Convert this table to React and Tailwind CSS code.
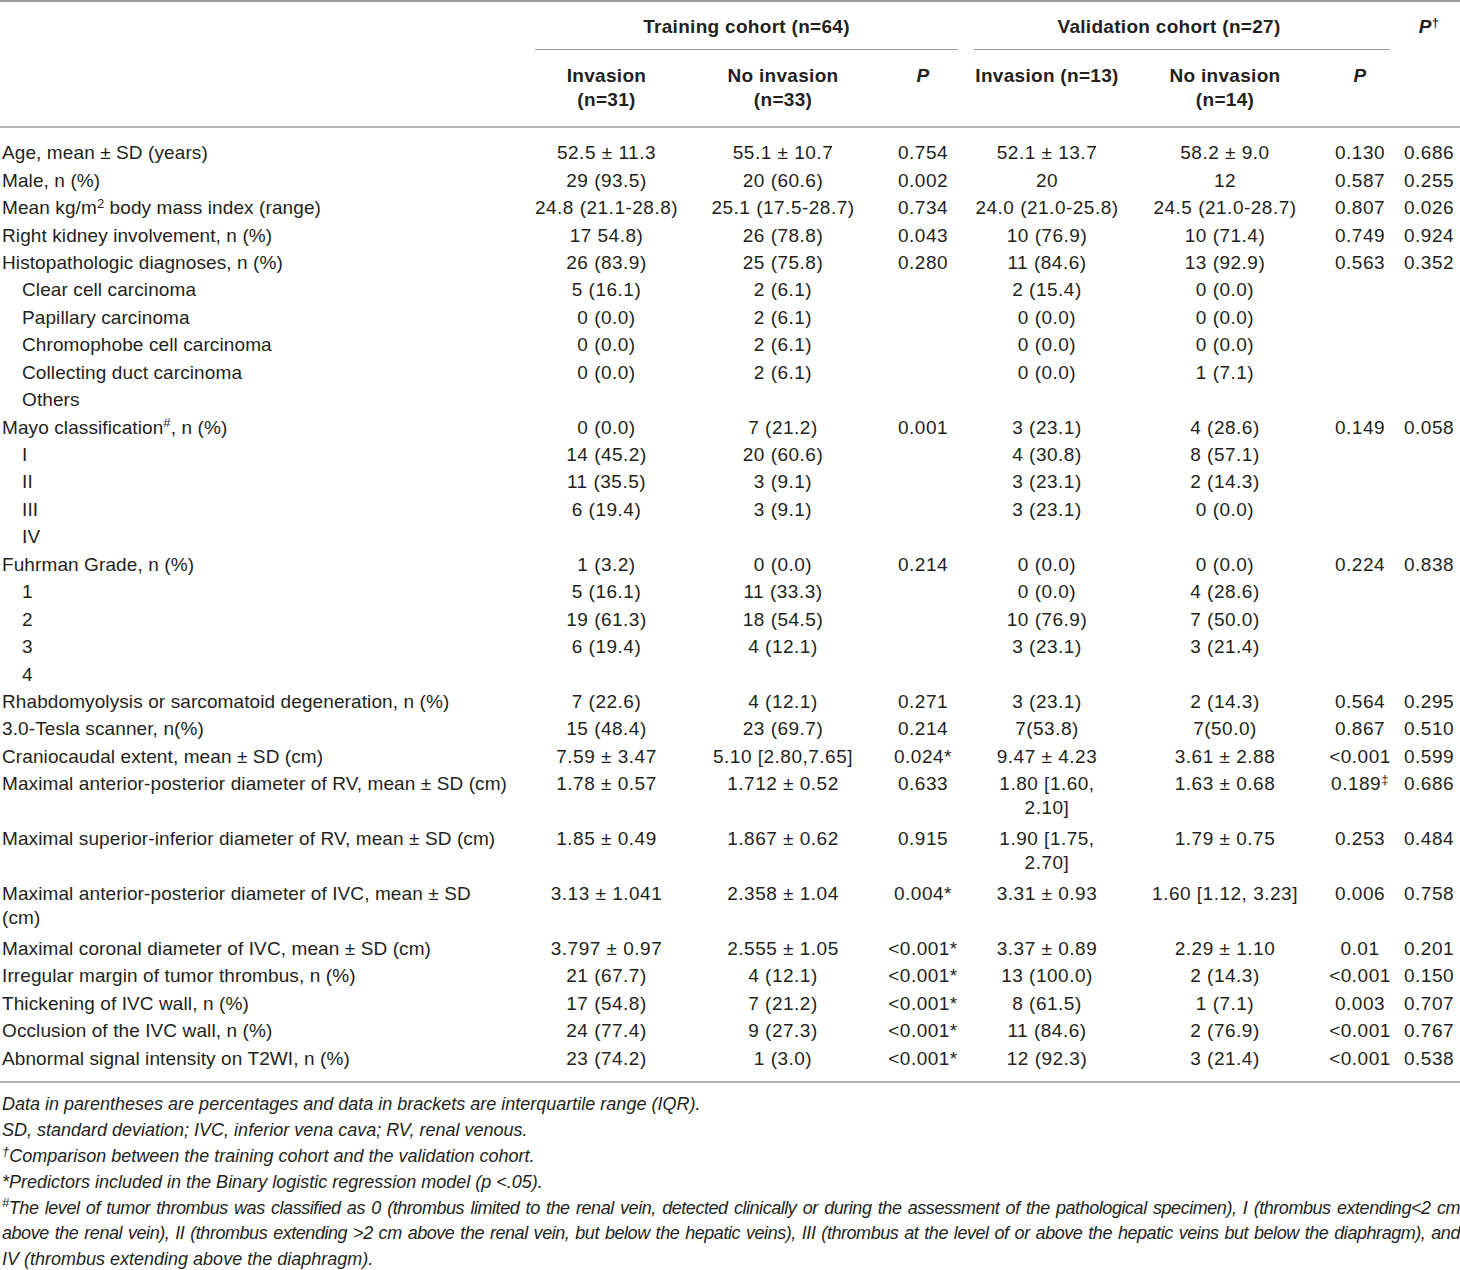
const cols = 'grid grid-cols-[527px_159px_194px_86px_162px_194px_76px_62px]';

const sup = 'text-[13px]';

const rows = [
  { label: 'Age, mean ± SD (years)', v: ['52.5 ± 11.3', '55.1 ± 10.7', '0.754', '52.1 ± 13.7', '58.2 ± 9.0', '0.130', '0.686'] },
  { label: 'Male, n (%)', v: ['29 (93.5)', '20 (60.6)', '0.002', '20', '12', '0.587', '0.255'] },
  {
    label: (
      <>
        Mean kg/m<sup className={sup}>2</sup> body mass index (range)
      </>
    ),
    v: ['24.8 (21.1-28.8)', '25.1 (17.5-28.7)', '0.734', '24.0 (21.0-25.8)', '24.5 (21.0-28.7)', '0.807', '0.026'],
  },
  { label: 'Right kidney involvement, n (%)', v: ['17 54.8)', '26 (78.8)', '0.043', '10 (76.9)', '10 (71.4)', '0.749', '0.924'] },
  { label: 'Histopathologic diagnoses, n (%)', v: ['26 (83.9)', '25 (75.8)', '0.280', '11 (84.6)', '13 (92.9)', '0.563', '0.352'] },
  { label: 'Clear cell carcinoma', sub: true, v: ['5 (16.1)', '2 (6.1)', '', '2 (15.4)', '0 (0.0)', '', ''] },
  { label: 'Papillary carcinoma', sub: true, v: ['0 (0.0)', '2 (6.1)', '', '0 (0.0)', '0 (0.0)', '', ''] },
  { label: 'Chromophobe cell carcinoma', sub: true, v: ['0 (0.0)', '2 (6.1)', '', '0 (0.0)', '0 (0.0)', '', ''] },
  { label: 'Collecting duct carcinoma', sub: true, v: ['0 (0.0)', '2 (6.1)', '', '0 (0.0)', '1 (7.1)', '', ''] },
  { label: 'Others', sub: true, v: ['', '', '', '', '', '', ''] },
  {
    label: (
      <>
        Mayo classification<sup className={sup}>#</sup>, n (%)
      </>
    ),
    v: ['0 (0.0)', '7 (21.2)', '0.001', '3 (23.1)', '4 (28.6)', '0.149', '0.058'],
  },
  { label: 'I', sub: true, v: ['14 (45.2)', '20 (60.6)', '', '4 (30.8)', '8 (57.1)', '', ''] },
  { label: 'II', sub: true, v: ['11 (35.5)', '3 (9.1)', '', '3 (23.1)', '2 (14.3)', '', ''] },
  { label: 'III', sub: true, v: ['6 (19.4)', '3 (9.1)', '', '3 (23.1)', '0 (0.0)', '', ''] },
  { label: 'IV', sub: true, v: ['', '', '', '', '', '', ''] },
  { label: 'Fuhrman Grade, n (%)', v: ['1 (3.2)', '0 (0.0)', '0.214', '0 (0.0)', '0 (0.0)', '0.224', '0.838'] },
  { label: '1', sub: true, v: ['5 (16.1)', '11 (33.3)', '', '0 (0.0)', '4 (28.6)', '', ''] },
  { label: '2', sub: true, v: ['19 (61.3)', '18 (54.5)', '', '10 (76.9)', '7 (50.0)', '', ''] },
  { label: '3', sub: true, v: ['6 (19.4)', '4 (12.1)', '', '3 (23.1)', '3 (21.4)', '', ''] },
  { label: '4', sub: true, v: ['', '', '', '', '', '', ''] },
  { label: 'Rhabdomyolysis or sarcomatoid degeneration, n (%)', v: ['7 (22.6)', '4 (12.1)', '0.271', '3 (23.1)', '2 (14.3)', '0.564', '0.295'] },
  { label: '3.0-Tesla scanner, n(%)', v: ['15 (48.4)', '23 (69.7)', '0.214', '7(53.8)', '7(50.0)', '0.867', '0.510'] },
  { label: 'Craniocaudal extent, mean ± SD (cm)', v: ['7.59 ± 3.47', '5.10 [2.80,7.65]', '0.024*', '9.47 ± 4.23', '3.61 ± 2.88', '<0.001', '0.599'] },
  {
    label: 'Maximal anterior-posterior diameter of RV, mean ± SD (cm)',
    double: true,
    v: [
      '1.78 ± 0.57',
      '1.712 ± 0.52',
      '0.633',
      <>
        1.80 [1.60,
        <br />
        2.10]
      </>,
      '1.63 ± 0.68',
      <>
        0.189<sup className={sup}>‡</sup>
      </>,
      '0.686',
    ],
  },
  {
    label: 'Maximal superior-inferior diameter of RV, mean ± SD (cm)',
    double: true,
    v: [
      '1.85 ± 0.49',
      '1.867 ± 0.62',
      '0.915',
      <>
        1.90 [1.75,
        <br />
        2.70]
      </>,
      '1.79 ± 0.75',
      '0.253',
      '0.484',
    ],
  },
  {
    label: (
      <>
        Maximal anterior-posterior diameter of IVC, mean ± SD
        <br />
        (cm)
      </>
    ),
    double: true,
    v: ['3.13 ± 1.041', '2.358 ± 1.04', '0.004*', '3.31 ± 0.93', '1.60 [1.12, 3.23]', '0.006', '0.758'],
  },
  { label: 'Maximal coronal diameter of IVC, mean ± SD (cm)', v: ['3.797 ± 0.97', '2.555 ± 1.05', '<0.001*', '3.37 ± 0.89', '2.29 ± 1.10', '0.01', '0.201'] },
  { label: 'Irregular margin of tumor thrombus, n (%)', v: ['21 (67.7)', '4 (12.1)', '<0.001*', '13 (100.0)', '2 (14.3)', '<0.001', '0.150'] },
  { label: 'Thickening of IVC wall, n (%)', v: ['17 (54.8)', '7 (21.2)', '<0.001*', '8 (61.5)', '1 (7.1)', '0.003', '0.707'] },
  { label: 'Occlusion of the IVC wall, n (%)', v: ['24 (77.4)', '9 (27.3)', '<0.001*', '11 (84.6)', '2 (76.9)', '<0.001', '0.767'] },
  { label: 'Abnormal signal intensity on T2WI, n (%)', v: ['23 (74.2)', '1 (3.0)', '<0.001*', '12 (92.3)', '3 (21.4)', '<0.001', '0.538'] },
];

function Row({ row }) {
  const h = row.double ? 'h-[54.9px]' : 'h-[27.45px]';
  return (
    <div className={`${cols} ${h}`}>
      <div className={`pt-[1.7px] leading-[24px] whitespace-nowrap tracking-[0.1px] ${row.sub ? 'pl-[22px]' : 'pl-[2px]'}`}>{row.label}</div>
      {row.v.map((val, i) => (
        <div key={i} className="flex justify-center pt-[1.7px] leading-[24px] tracking-[0.5px]">
          <span className="text-center whitespace-nowrap">{val}</span>
        </div>
      ))}
    </div>
  );
}

export default function App() {
  return (
    <div className="w-[1460px] h-[1270px] bg-white text-[#231f20] text-[19px] font-['Liberation_Sans',Arial,sans-serif] overflow-hidden">
      <div className="border-t-2 border-[#9a9a9a]">
        {/* header */}
        <div className={`${cols} font-bold tracking-[0.3px]`}>
          <div className="row-span-2" />
          <div className="col-span-3 h-[48px] px-2">
            <div className="h-full border-b border-[#9a9a9a] pt-[13px] leading-[24px] text-center">Training cohort (n=64)</div>
          </div>
          <div className="col-span-3 h-[48px] px-2">
            <div className="h-full border-b border-[#9a9a9a] pt-[13px] leading-[24px] text-center pr-[26px]">Validation cohort (n=27)</div>
          </div>
          <div className="pt-[13px] leading-[24px] text-center">
            <i>P</i>
            <sup className={sup}>†</sup>
          </div>
          <div className="h-[76px] pt-[14px] leading-[24px] text-center">
            Invasion
            <br />
            (n=31)
          </div>
          <div className="pt-[14px] leading-[24px] text-center">
            No invasion
            <br />
            (n=33)
          </div>
          <div className="pt-[14px] leading-[24px] text-center italic">P</div>
          <div className="flex justify-center pt-[14px] leading-[24px]">
            <span className="whitespace-nowrap">Invasion (n=13)</span>
          </div>
          <div className="pt-[14px] leading-[24px] text-center">
            No invasion
            <br />
            (n=14)
          </div>
          <div className="pt-[14px] leading-[24px] text-center italic">P</div>
          <div />
        </div>

        {/* body */}
        <div className="border-t-2 border-[#b3b3b3] pt-[11.5px] pb-[9px] border-b-2">
          {rows.map((r, i) => (
            <Row key={i} row={r} />
          ))}
        </div>

        {/* footnotes */}
        <div className="pt-[9px] italic leading-[25.8px] text-[18px] pl-[2px]">
          <div>Data in parentheses are percentages and data in brackets are interquartile range (IQR).</div>
          <div>SD, standard deviation; IVC, inferior vena cava; RV, renal venous.</div>
          <div>
            <sup className={sup}>†</sup>Comparison between the training cohort and the validation cohort.
          </div>
          <div>*Predictors included in the Binary logistic regression model (p &lt;.05).</div>
          <div className="whitespace-nowrap tracking-[-0.45px] [text-align-last:justify] text-justify">
            <sup className={sup}>#</sup>The level of tumor thrombus was classified as 0 (thrombus limited to the renal vein, detected clinically or during the assessment of the pathological specimen), I (thrombus extending&lt;2 cm
          </div>
          <div className="whitespace-nowrap tracking-[-0.45px] [text-align-last:justify] text-justify">
            above the renal vein), II (thrombus extending &gt;2 cm above the renal vein, but below the hepatic veins), III (thrombus at the level of or above the hepatic veins but below the diaphragm), and
          </div>
          <div>IV (thrombus extending above the diaphragm).</div>
        </div>
      </div>
    </div>
  );
}
